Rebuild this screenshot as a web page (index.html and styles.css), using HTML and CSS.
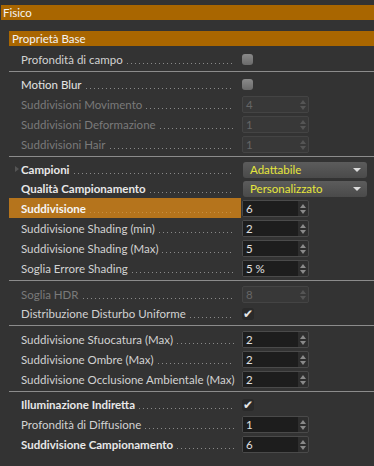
FILE: index.html
```html
<!DOCTYPE html>
<html lang="it">
<head>
    <meta charset="UTF-8">
    <title>Fisico</title>
    <link rel="stylesheet" href="styles.css">
</head>
<body>
    <div class="panel">
        <div class="group-title">Fisico</div>
        <div class="section">
            <div class="section-title">Proprietà Base</div>
            <div class="rows">
                <div class="row short">
                    <div class="label"><span>Profondità di campo</span><i class="dots"></i></div>
                    <span class="check"></span>
                </div>
                <div class="sep"></div>

                <div class="row short">
                    <div class="label strong"><span>Motion Blur</span><i class="dots"></i></div>
                    <span class="check"></span>
                </div>
                <div class="row off">
                    <div class="label"><span>Suddivisioni Movimento</span><i class="dots"></i></div>
                    <div class="num"><span class="val">4</span><span class="spin"></span></div>
                </div>
                <div class="row off">
                    <div class="label"><span>Suddivisioni Deformazione</span><i class="dots"></i></div>
                    <div class="num"><span class="val">1</span><span class="spin"></span></div>
                </div>
                <div class="row off">
                    <div class="label"><span>Suddivisioni Hair</span><i class="dots"></i></div>
                    <div class="num"><span class="val">1</span><span class="spin"></span></div>
                </div>
                <div class="sep"></div>

                <div class="row short">
                    <div class="label bold"><span class="arrow"></span><span>Campioni</span><i class="dots"></i></div>
                    <div class="select">Adattabile</div>
                </div>
                <div class="row short">
                    <div class="label bold"><span>Qualità Campionamento</span><i class="dots"></i></div>
                    <div class="select">Personalizzato</div>
                </div>
                <div class="row">
                    <div class="label bold active"><span>Suddivisione</span><i class="dots"></i></div>
                    <div class="num"><span class="val">6</span><span class="spin"></span></div>
                </div>
                <div class="row">
                    <div class="label"><span>Suddivisione Shading (min)</span><i class="dots"></i></div>
                    <div class="num"><span class="val">2</span><span class="spin"></span></div>
                </div>
                <div class="row">
                    <div class="label"><span>Suddivisione Shading (Max)</span><i class="dots"></i></div>
                    <div class="num"><span class="val">5</span><span class="spin"></span></div>
                </div>
                <div class="row">
                    <div class="label"><span>Soglia Errore Shading</span><i class="dots"></i></div>
                    <div class="num"><span class="val">5 %</span><span class="spin"></span></div>
                </div>
                <div class="sep"></div>

                <div class="row off">
                    <div class="label"><span>Soglia HDR</span><i class="dots"></i></div>
                    <div class="num"><span class="val">8</span><span class="spin"></span></div>
                </div>
                <div class="row short">
                    <div class="label"><span>Distribuzione Disturbo Uniforme</span><i class="dots"></i></div>
                    <span class="check on">&#10004;</span>
                </div>
                <div class="sep"></div>

                <div class="row">
                    <div class="label"><span>Suddivisione Sfuocatura (Max)</span><i class="dots"></i></div>
                    <div class="num"><span class="val">2</span><span class="spin"></span></div>
                </div>
                <div class="row">
                    <div class="label"><span>Suddivisione Ombre (Max)</span><i class="dots"></i></div>
                    <div class="num"><span class="val">2</span><span class="spin"></span></div>
                </div>
                <div class="row">
                    <div class="label wide"><span>Suddivisione Occlusione Ambientale (Max)</span></div>
                    <div class="num"><span class="val">2</span><span class="spin"></span></div>
                </div>
                <div class="sep"></div>

                <div class="row short">
                    <div class="label bold"><span>Illuminazione Indiretta</span><i class="dots"></i></div>
                    <span class="check on">&#10004;</span>
                </div>
                <div class="row">
                    <div class="label"><span>Profondità di Diffusione</span><i class="dots"></i></div>
                    <div class="num"><span class="val">1</span><span class="spin"></span></div>
                </div>
                <div class="row">
                    <div class="label bold"><span>Suddivisione Campionamento</span><i class="dots"></i></div>
                    <div class="num"><span class="val">6</span><span class="spin"></span></div>
                </div>
            </div>
        </div>
    </div>
</body>
</html>
```

FILE: styles.css
```css
body {
    margin: 0;
    background-color: #333333;
    font-family: Lato, "Liberation Sans", sans-serif;
    font-size: 11.5px;
    color: #d2d2d2;
}
.panel {
    padding-top: 5px;
    height: 461px;
    overflow: hidden;
}
.group-title {
    height: 15px;
    line-height: 15px;
    margin-left: 1px;
    padding-left: 2px;
    background-color: #a96600;
    color: #f4f4f4;
}
.section {
    margin-top: 11px;
    margin-left: 9px;
}
.section-title {
    height: 15px;
    line-height: 15px;
    padding-left: 3px;
    background-color: #a96600;
    color: #f4f4f4;
}
.rows {
    padding-top: 4px;
}
.row {
    display: grid;
    grid-template-columns: 232px 1fr;
    align-items: center;
    height: 20px;
}
.row.short {
    height: 19px;
}
.label {
    display: flex;
    align-items: center;
    height: 100%;
    padding-left: 12px;
    padding-right: 7px;
    white-space: nowrap;
    overflow: hidden;
    position: relative;
}
.label.wide {
    padding-right: 2px;
}
.label.bold {
    font-weight: bold;
    color: #e8e8e8;
}
.label.strong {
    color: #e4e4e4;
}
.label.active {
    background-color: #b5741c;
    color: #f6f6f6;
}
.row.off .label {
    color: #7a7a7a;
}
.dots {
    flex: 1;
    height: 1px;
    margin-left: 4px;
    margin-top: 8px;
    background-image: linear-gradient(to right, #8a8a8a 1px, transparent 1px);
    background-size: 4px 1px;
    background-repeat: repeat-x;
}
.label.active .dots {
    background-image: linear-gradient(to right, #c89040 1px, transparent 1px);
}
.arrow {
    position: absolute;
    left: 6px;
    top: 6px;
    border-left: 4px solid #555;
    border-top: 3px solid transparent;
    border-bottom: 3px solid transparent;
}
.sep {
    height: 1px;
    margin: 2px 0 3px;
    background-color: #8c8c8c;
}
.check {
    width: 11px;
    height: 11px;
    margin-left: 1px;
    border-radius: 3px;
    background: linear-gradient(#8a8a8a, #6a6a6a);
}
.check.on {
    width: 12px;
    height: 12px;
    background: #2a2a2a;
    color: #e6e6e6;
    font-size: 12px;
    line-height: 12px;
    text-align: center;
    font-family: "DejaVu Sans", sans-serif;
}
.num {
    display: flex;
    width: 65px;
    height: 15px;
    margin-left: 1px;
    border: 1px solid #4a4a4a;
    border-radius: 2px;
    background-color: #2e2e2e;
}
.val {
    flex: 1;
    background-color: #1d1d1d;
    color: #e0e0e0;
    padding-left: 3px;
    line-height: 15px;
}
.spin {
    width: 10px;
    position: relative;
}
.spin::before,
.spin::after {
    content: "";
    position: absolute;
    left: 2px;
    border-left: 3px solid transparent;
    border-right: 3px solid transparent;
}
.spin::before {
    top: 3px;
    border-bottom: 4px solid #8a8a8a;
}
.spin::after {
    top: 9px;
    border-top: 4px solid #8a8a8a;
}
.row.off .num {
    background-color: #383838;
    border-color: #444;
}
.row.off .val {
    background-color: transparent;
    color: #666;
}
.row.off .spin::before {
    border-bottom-color: #555;
}
.row.off .spin::after {
    border-top-color: #555;
}
.select {
    position: relative;
    width: 124px;
    height: 16px;
    margin-left: 2px;
    margin-right: 7px;
    border-radius: 3px;
    background: linear-gradient(#5c5c5c, #4a4a4a);
    color: #e6e63c;
    padding-left: 7px;
    line-height: 16px;
    box-sizing: border-box;
}
.select::after {
    content: "";
    position: absolute;
    right: 6px;
    top: 6px;
    border-left: 4px solid transparent;
    border-right: 4px solid transparent;
    border-top: 4px solid #dcdcdc;
}
```
